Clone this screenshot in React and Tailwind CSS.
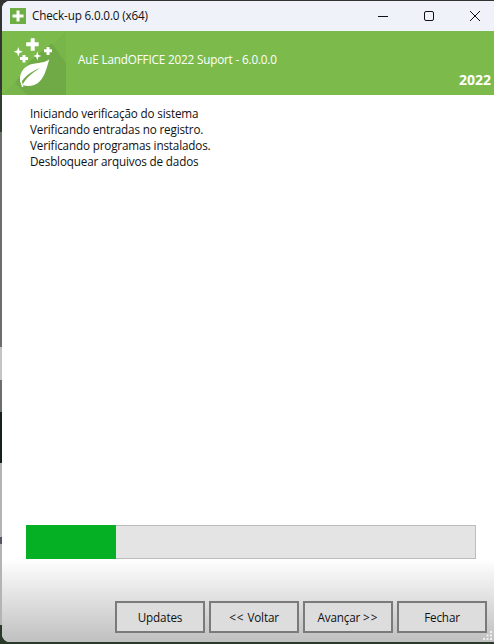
import React from "react";

function Logo() {
  return (
    <svg width="66" height="64" viewBox="0 0 66 64" className="shrink-0">
      <polygon points="64,0 64,64 0,64" fill="#78b54a" />
      <polygon points="49.700,12.300 64,32 64,64 25,64 13,52 28,30" fill="#70aa47" />
      <g fill="#ffffff">
        <path d="M28.700 7.300h4v4h4v4h-4v4.500h-4v-4.500h-4.500v-4h4.500Z" />
        <path d="M20.500 24h3v2h2.500v3h-2.500v2.500h-3v-2.500h-2.500v-3h2.500Z" />
        <path d="M44.500 16h3v2.300h2.500v3h-2.500v2.700h-3v-2.700h-2.500v-3h2.500Z" />
        <path d="M16.300 16 L17.500 19.500 L21 20.700 L17.500 21.900 L16.300 25.500 L15.100 21.900 L11.600 20.700 L15.100 19.500Z" />
        <path d="M35.300 20.500 L36.400 23.900 L39.500 25 L36.400 26.100 L35.300 29.500 L34.200 26.100 L31.100 25 L34.200 23.900Z" />
        <path d="M47.300 28.300 C44 31 38 32 33 32.500 C25 33 19 39 18 46 C17.800 48 18 50 19 52 C22 46 28 41 38 37 C30 42 24 47 20.500 54 C26 56 34 55 38 50 C43 45 45 36 47.300 28.300Z" />
      </g>
      <path d="M18.700 49 L20.700 56" stroke="#ffffff" strokeWidth="1.500" fill="none" />
    </svg>
  );
}

function Btn({ children }) {
  return (
    <button className="w-[90px] h-[32px] border-2 border-[#7a7a7a] bg-[#dddddd] text-[11.7px] tracking-[-0.16px] text-[#111111] flex items-center justify-center pt-px">
      {children}
    </button>
  );
}

function Grip() {
  return (
    <svg width="10" height="10" viewBox="0 0 10 10" className="absolute right-[1px] bottom-[1px]">
      <g fill="#f0f0f0">
        <rect x="7" y="0" width="2" height="2" />
        <rect x="3.500" y="3.500" width="2" height="2" />
        <rect x="7" y="3.500" width="2" height="2" />
        <rect x="0" y="7" width="2" height="2" />
        <rect x="3.500" y="7" width="2" height="2" />
        <rect x="7" y="7" width="2" height="2" />
      </g>
    </svg>
  );
}

export default function App() {
  return (
    <div className="w-[494px] h-[644px] bg-[linear-gradient(to_bottom,#333333_0px,#333333_90px,#2f3f2f_90px,#2f3f2f_132px,#6b6e6b_132px,#6b6e6b_347px,#c4c4c4_347px,#c4c4c4_380px,#6b6e6b_380px,#6b6e6b_412px,#152018_412px,#152018_463px,#b4b4b4_463px,#b4b4b4_537px,#555566_537px,#555566_544px,#b4b4b4_544px,#b4b4b4_625px,#2a3a2a_625px)] overflow-hidden font-['Open_Sans','Noto_Sans',sans-serif] pt-px pl-[2px]">
      <div className="relative w-[492px] h-[641px] bg-white rounded-tl-lg rounded-bl-lg overflow-hidden flex flex-col">
        <div className="h-[30px] bg-[#eff2f9] flex items-center shrink-0">
          <div className="w-4 h-4 ml-2 bg-[#6fae44] flex items-center justify-center shrink-0">
            <svg width="12" height="12" viewBox="0 0 12 12">
              <path d="M4.500 0.500h3v4h4v3h-4v4h-3v-4h-4v-3h4Z" fill="#ffffff" />
            </svg>
          </div>
          <span className="ml-[6px] text-[11.7px] tracking-[-0.16px] text-[#111111]">Check-up 6.0.0.0 (x64)</span>
          <div className="ml-auto flex items-center">
            <svg width="12" height="12" viewBox="0 0 12 12" className="mr-[34px]">
              <path d="M1 6.500H11" stroke="#111" strokeWidth="1" />
            </svg>
            <svg width="12" height="12" viewBox="0 0 12 12" className="mr-[34px]">
              <rect x="1.500" y="1.500" width="9" height="9" rx="1.500" fill="none" stroke="#111" strokeWidth="1" />
            </svg>
            <svg width="12" height="12" viewBox="0 0 12 12" className="mr-[13px]">
              <path d="M1 1L11 11M11 1L1 11" stroke="#111" strokeWidth="1" />
            </svg>
          </div>
        </div>
        <div className="h-[64px] bg-[#7cbb4b] relative flex shrink-0">
          <Logo />
          <div className="ml-[10px] mt-[20px] text-[11.7px] tracking-[-0.16px] leading-[16px] text-white">AuE LandOFFICE 2022 Suport - 6.0.0.0</div>
          <div className="absolute right-[3px] bottom-[6px] text-[14px] leading-[18px] font-bold text-white">2022</div>
        </div>
        <div className="flex-1 pl-[28px] pt-[10px] text-[11.7px] tracking-[-0.16px] leading-[16px] text-[#111111]">
          <div>Iniciando verificação do sistema</div>
          <div>Verificando entradas no registro.</div>
          <div>Verificando programas instalados.</div>
          <div>Desbloquear arquivos de dados</div>
        </div>
        <div className="px-6 shrink-0">
          <div className="w-[450px] h-[34px] bg-[#e4e4e4] border border-[#bcbcbc] relative">
            <div className="absolute -left-px -top-px -bottom-px w-[90px] bg-[#06b025]" />
          </div>
        </div>
        <div className="h-[83px] shrink-0 bg-gradient-to-b from-white to-[#c0c0c0] flex items-end justify-end gap-[4px] pr-[7px] pb-[9px]">
          <Btn>Updates</Btn>
          <Btn><span className="tracking-[1px]">&lt;&lt;</span>&nbsp;Voltar</Btn>
          <Btn>Avançar&nbsp;<span className="tracking-[1px]">&gt;&gt;</span></Btn>
          <Btn>Fechar</Btn>
        </div>
        <Grip />
      </div>
    </div>
  );
}
